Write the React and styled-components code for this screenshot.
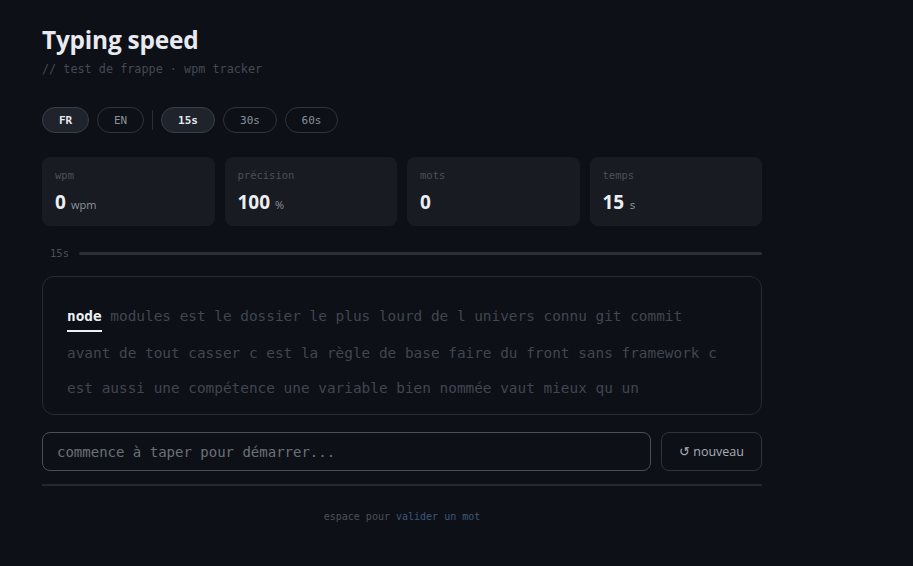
import React from 'react'
import styled, { createGlobalStyle } from 'styled-components'

const mono = `"DejaVu Sans Mono", "Liberation Mono", monospace`
const sans = `"Open Sans", "Noto Sans", sans-serif`

const GlobalStyle = createGlobalStyle`
    html, body {
        margin: 0;
        background: #0d1017;
        height: 100%;
    }
`

const Page = styled.div`
    min-height: 566px;
    background: #0d1017;
    padding: 23px 42px 0;
    box-sizing: border-box;
    width: 804px;
`

const Title = styled.h1`
    margin: 0;
    font-family: ${sans};
    font-weight: 700;
    font-size: 24.4px;
    line-height: 34px;
    color: #e8eaef;
    letter-spacing: -0.2px;
`

const Subtitle = styled.div`
    font-family: ${mono};
    font-size: 11.8px;
    color: #444a55;
    margin-top: 5px;
`

const Toolbar = styled.div`
    display: flex;
    align-items: center;
    gap: 8px;
    margin-top: 31px;
`

const Pill = styled.button`
    font-family: ${mono};
    font-size: 11px;
    font-weight: ${p => (p.$active ? 700 : 400)};
    color: ${p => (p.$active ? '#e6e8ec' : '#8a909b')};
    background: ${p => (p.$active ? '#1f232b' : 'transparent')};
    border: 1px solid ${p => (p.$active ? '#3a3f48' : '#30343c')};
    border-radius: 13px;
    height: 26px;
    width: ${p => p.$w}px;
    padding: 0;
    cursor: pointer;
`

const Divider = styled.span`
    width: 1px;
    height: 20px;
    background: #2b2f37;
`

const Stats = styled.div`
    display: grid;
    grid-template-columns: repeat(4, 1fr);
    gap: 10px;
    margin-top: 24px;
`

const Card = styled.div`
    background: #181b22;
    border-radius: 8px;
    height: 69px;
    padding: 11px 13px;
    box-sizing: border-box;
`

const CardLabel = styled.div`
    font-family: ${mono};
    font-size: 10.5px;
    color: #4a505b;
    line-height: 14px;
`

const CardValue = styled.div`
    margin-top: 7px;
    font-family: ${sans};
    font-size: 19px;
    font-weight: 700;
    color: #eceef2;
    display: flex;
    align-items: baseline;
    gap: 5px;
`

const Unit = styled.span`
    font-size: 11px;
    font-weight: 400;
    color: #8d929c;
    font-family: ${p => (p.$mono ? mono : sans)};
`

const Progress = styled.div`
    display: flex;
    align-items: center;
    gap: 10px;
    margin-top: 21px;
    padding-left: 8px;
`

const ProgressLabel = styled.span`
    font-family: ${mono};
    font-size: 10.5px;
    color: #4a505b;
`

const Track = styled.div`
    flex: 1;
    height: 3px;
    border-radius: 2px;
    background: #2a2e36;
`

const TextBox = styled.div`
    margin-top: 17px;
    border: 1px solid #262a32;
    border-radius: 12px;
    padding: 25px 24px 20px;
    height: 139px;
    box-sizing: border-box;
    font-family: ${mono};
    font-size: 14.4px;
    line-height: 36px;
    color: #41464f;
`

const Line = styled.div`
    white-space: pre;
    line-height: ${p => p.$h}px;
`

const Current = styled.span`
    color: #eef0f3;
    font-weight: 700;
    position: relative;
    &::after {
        content: '';
        position: absolute;
        left: 0;
        right: 0;
        bottom: -8px;
        height: 2px;
        background: #eef0f3;
    }
`

const InputRow = styled.div`
    display: flex;
    gap: 10px;
    margin-top: 17px;
`

const Input = styled.input`
    flex: 1;
    height: 39px;
    box-sizing: border-box;
    background: transparent;
    border: 1px solid #4a4e56;
    border-radius: 8px;
    padding: 0 14px;
    font-family: ${mono};
    font-size: 14px;
    color: #ddd;
    outline: none;
    &::placeholder {
        color: #6b7078;
    }
`

const ResetButton = styled.button`
    width: 101px;
    height: 39px;
    background: transparent;
    border: 1px solid #30343c;
    border-radius: 8px;
    font-family: ${sans};
    font-size: 12.5px;
    color: #a9aeb7;
    cursor: pointer;
`

const Rule = styled.div`
    height: 2px;
    background: #23272e;
    margin-top: 13px;
`

const Footer = styled.div`
    text-align: center;
    margin-top: 25px;
    font-family: ${mono};
    font-size: 10px;
    color: #4a505b;
`

const Hint = styled.span`
    color: #3f5878;
`

const stats = [
    { label: 'wpm', value: '0', unit: 'wpm' },
    { label: 'précision', value: '100', unit: '%' },
    { label: 'mots', value: '0' },
    { label: 'temps', value: '15', unit: 's', mono: true },
]

const App = () => (
    <Page>
        <GlobalStyle />
        <Title>Typing speed</Title>
        <Subtitle>// test de frappe · wpm tracker</Subtitle>

        <Toolbar>
            <Pill $active $w={47}>FR</Pill>
            <Pill $w={47}>EN</Pill>
            <Divider />
            <Pill $active $w={54}>15s</Pill>
            <Pill $w={54}>30s</Pill>
            <Pill $w={53}>60s</Pill>
        </Toolbar>

        <Stats>
            {stats.map(s => (
                <Card key={s.label}>
                    <CardLabel>{s.label}</CardLabel>
                    <CardValue>
                        {s.value}
                        {s.unit && <Unit $mono={s.mono}>{s.unit}</Unit>}
                    </CardValue>
                </Card>
            ))}
        </Stats>

        <Progress>
            <ProgressLabel>15s</ProgressLabel>
            <Track />
        </Progress>

        <TextBox>
            <Line $h={28}>
                <Current>node</Current> modules est le dossier le plus lourd de l univers connu git commit
            </Line>
            <Line $h={46}>avant de tout casser c est la règle de base faire du front sans framework c</Line>
            <Line $h={24}>est aussi une compétence une variable bien nommée vaut mieux qu un</Line>
        </TextBox>

        <InputRow>
            <Input placeholder='commence à taper pour démarrer...' />
            <ResetButton>↺ nouveau</ResetButton>
        </InputRow>

        <Rule />

        <Footer>
            espace pour <Hint>valider un mot</Hint>
        </Footer>
    </Page>
)

export default App
